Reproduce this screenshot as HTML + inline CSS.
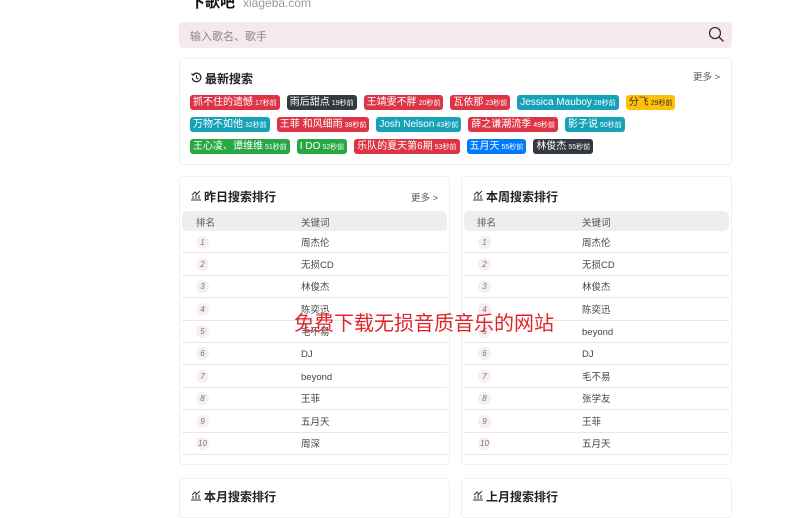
<!DOCTYPE html>
<html><head><meta charset="utf-8"><style>
*{margin:0;padding:0;box-sizing:border-box}
body{width:801px;height:500px;overflow:hidden;background:#fff;font-family:"Liberation Sans","Noto Sans CJK SC",sans-serif;color:#333;position:relative}
.abs{position:absolute}
.logo{left:190px;top:-9px;font-size:15px;font-weight:bold;color:#111}
.logo span{font-weight:normal;color:#999;font-size:12px;margin-left:8px}
.search{left:179px;top:22px;width:553px;height:26px;background:#f5e9eb;border-radius:4px;font-size:11px;color:#888;padding:6px 11px}
.card{background:#fff;border:1px solid #f0f0f0;border-radius:3px}
.ttl{font-size:12px;font-weight:bold;color:#222}
.more{font-size:9.5px;color:#555}
.tags{left:190px;width:540px;display:flex;flex-wrap:nowrap;gap:7px}
.tag{height:15px;line-height:15px;border-radius:3px;color:#fff;font-size:10px;padding:0 3px;white-space:nowrap}
.tag small{font-size:7px;margin-left:2px}
.r{background:#dc3545}.d{background:#343a40}.c{background:#17a2b8}.y{background:#ffc107;color:#333}.g{background:#28a745}.b{background:#007bff}
.th{height:20px;background:#eee;border-radius:5px;font-size:9.5px;color:#555}
.row{height:22.4px;border-bottom:1px solid #e8e8e8;font-size:9.5px;color:#444;position:relative}
.row i{position:absolute;left:14px;top:4.5px;width:13px;height:13px;border-radius:50%;background:#f7eef0;font-size:8px;color:#777;text-align:center;line-height:13px}
.row b{position:absolute;top:1.5px;line-height:22px;font-weight:normal}
</style></head><body>
<div class="abs logo">下歌吧<span>xiageba.com</span></div>
<div class="abs search">输入歌名、歌手</div>
<svg class="abs" style="left:708px;top:26px" width="17" height="17" viewBox="0 0 17 17"><circle cx="7" cy="7" r="5.5" fill="none" stroke="#333" stroke-width="1.3"/><line x1="11" y1="11" x2="15.5" y2="15.5" stroke="#333" stroke-width="1.4"/></svg>

<div class="abs card" style="left:179px;top:58px;width:553px;height:107px"></div>
<svg class="abs" style="left:191px;top:72px" width="11" height="11" viewBox="0 0 11 11"><path d="M2 3A4.3 4.3 0 1 1 1.3 6" fill="none" stroke="#222" stroke-width="1.2"/><path d="M5.5 3v3l2 1" fill="none" stroke="#222" stroke-width="1"/><path d="M0.5 1.5L2 3.3 3.8 2" fill="none" stroke="#222" stroke-width="1"/></svg>
<div class="abs ttl" style="left:205px;top:70px">最新搜索</div>
<div class="abs more" style="left:693px;top:69px">更多 &gt;</div>
<div class="abs tags" style="top:95px">
<span class="tag r">抓不住的遗憾<small>17秒前</small></span><span class="tag d">雨后甜点<small>19秒前</small></span><span class="tag r">王靖雯不胖<small>20秒前</small></span><span class="tag r">瓦依那<small>23秒前</small></span><span class="tag c">Jessica Mauboy<small>28秒前</small></span><span class="tag y">分飞<small>29秒前</small></span>
</div>
<div class="abs tags" style="top:117px">
<span class="tag c">万物不如他<small>32秒前</small></span><span class="tag r">王菲 和风细雨<small>38秒前</small></span><span class="tag c">Josh Nelson<small>43秒前</small></span><span class="tag r">薛之谦潮流季<small>49秒前</small></span><span class="tag c">影子说<small>50秒前</small></span>
</div>
<div class="abs tags" style="top:139px">
<span class="tag g">王心凌、谭维维<small>51秒前</small></span><span class="tag g">I DO<small>52秒前</small></span><span class="tag r">乐队的夏天第6期<small>53秒前</small></span><span class="tag b">五月天<small>55秒前</small></span><span class="tag d">林俊杰<small>55秒前</small></span>
</div>

<div class="abs card" style="left:179px;top:176px;width:271px;height:289px"></div>
<div class="abs card" style="left:461px;top:176px;width:271px;height:289px"></div>
<div class="abs card" style="left:179px;top:478px;width:271px;height:40px"></div>
<div class="abs card" style="left:461px;top:478px;width:271px;height:40px"></div>

<svg class="abs" style="left:190px;top:189px" width="12" height="12" viewBox="0 0 12 12"><path d="M1 11h10M3 10V7M6 10V5M9 10V6M2 6l3-3 2 2 3-3" fill="none" stroke="#333" stroke-width="1"/></svg>
<div class="abs ttl" style="left:204px;top:188px">昨日搜索排行</div>
<div class="abs more" style="left:411px;top:190px">更多 &gt;</div>
<svg class="abs" style="left:472px;top:189px" width="12" height="12" viewBox="0 0 12 12"><path d="M1 11h10M3 10V7M6 10V5M9 10V6M2 6l3-3 2 2 3-3" fill="none" stroke="#333" stroke-width="1"/></svg>
<div class="abs ttl" style="left:486px;top:188px">本周搜索排行</div>
<svg class="abs" style="left:190px;top:489px" width="12" height="12" viewBox="0 0 12 12"><path d="M1 11h10M3 10V7M6 10V5M9 10V6M2 6l3-3 2 2 3-3" fill="none" stroke="#333" stroke-width="1"/></svg>
<div class="abs ttl" style="left:204px;top:488px">本月搜索排行</div>
<svg class="abs" style="left:472px;top:489px" width="12" height="12" viewBox="0 0 12 12"><path d="M1 11h10M3 10V7M6 10V5M9 10V6M2 6l3-3 2 2 3-3" fill="none" stroke="#333" stroke-width="1"/></svg>
<div class="abs ttl" style="left:486px;top:488px">上月搜索排行</div>

<div class="abs" style="left:182px;top:211px;width:265px">
<div class="th" style="position:relative"><span class="abs" style="left:14px;top:4px">排名</span><span class="abs" style="left:119px;top:4px">关键词</span></div>
<div class="row"><i>1</i><b style="left:119px">周杰伦</b></div>
<div class="row"><i>2</i><b style="left:119px">无损CD</b></div>
<div class="row"><i>3</i><b style="left:119px">林俊杰</b></div>
<div class="row"><i>4</i><b style="left:119px">陈奕迅</b></div>
<div class="row"><i>5</i><b style="left:119px">毛不易</b></div>
<div class="row"><i>6</i><b style="left:119px">DJ</b></div>
<div class="row"><i>7</i><b style="left:119px">beyond</b></div>
<div class="row"><i>8</i><b style="left:119px">王菲</b></div>
<div class="row"><i>9</i><b style="left:119px">五月天</b></div>
<div class="row"><i>10</i><b style="left:119px">周深</b></div>
</div>
<div class="abs" style="left:464px;top:211px;width:265px">
<div class="th" style="position:relative"><span class="abs" style="left:13px;top:4px">排名</span><span class="abs" style="left:118px;top:4px">关键词</span></div>
<div class="row"><i>1</i><b style="left:118px">周杰伦</b></div>
<div class="row"><i>2</i><b style="left:118px">无损CD</b></div>
<div class="row"><i>3</i><b style="left:118px">林俊杰</b></div>
<div class="row"><i>4</i><b style="left:118px">陈奕迅</b></div>
<div class="row"><i>5</i><b style="left:118px">beyond</b></div>
<div class="row"><i>6</i><b style="left:118px">DJ</b></div>
<div class="row"><i>7</i><b style="left:118px">毛不易</b></div>
<div class="row"><i>8</i><b style="left:118px">张学友</b></div>
<div class="row"><i>9</i><b style="left:118px">王菲</b></div>
<div class="row"><i>10</i><b style="left:118px">五月天</b></div>
</div>

<div class="abs" style="left:294px;top:307px;font-size:20px;color:#e0262b;white-space:nowrap">免费下载无损音质音乐的网站</div>
</body></html>
